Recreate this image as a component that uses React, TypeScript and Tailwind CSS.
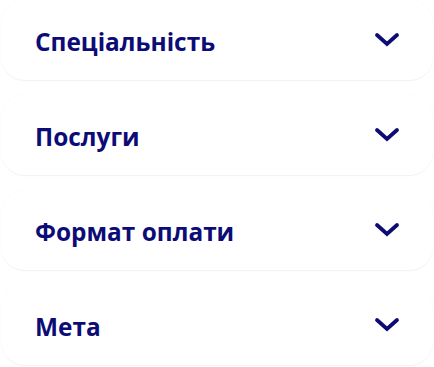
const items = ["Спеціальність", "Послуги", "Формат оплати", "Мета"];

const Chevron = () => (
  <svg width="26" height="16" viewBox="0 0 26 16" fill="none" className="shrink-0">
    <polyline
      points="3,3 13,12 23,3"
      stroke="#0c0c74"
      strokeWidth="3.8"
      strokeLinecap="round"
      strokeLinejoin="miter"
    />
  </svg>
);

export default function App() {
  return (
    <div className="w-[434px] h-[367px] bg-white overflow-hidden flex flex-col gap-[14px] px-[1px]" style={{ fontFamily: '"Open Sans", "Noto Sans", sans-serif' }}>
      {items.map((label) => (
        <button
          key={label}
          className="h-[81px] w-full shrink-0 flex items-center justify-between pl-[34px] pr-[33px] rounded-[24px] bg-white border-b border-[#f3f3f3] shadow-[0_0_2px_rgba(0,0,0,0.035)] text-left"
        >
          <span className="text-[24.4px] font-bold text-[#0c0c76] leading-none pt-[4px]">{label}</span>
          <Chevron />
        </button>
      ))}
    </div>
  );
}
